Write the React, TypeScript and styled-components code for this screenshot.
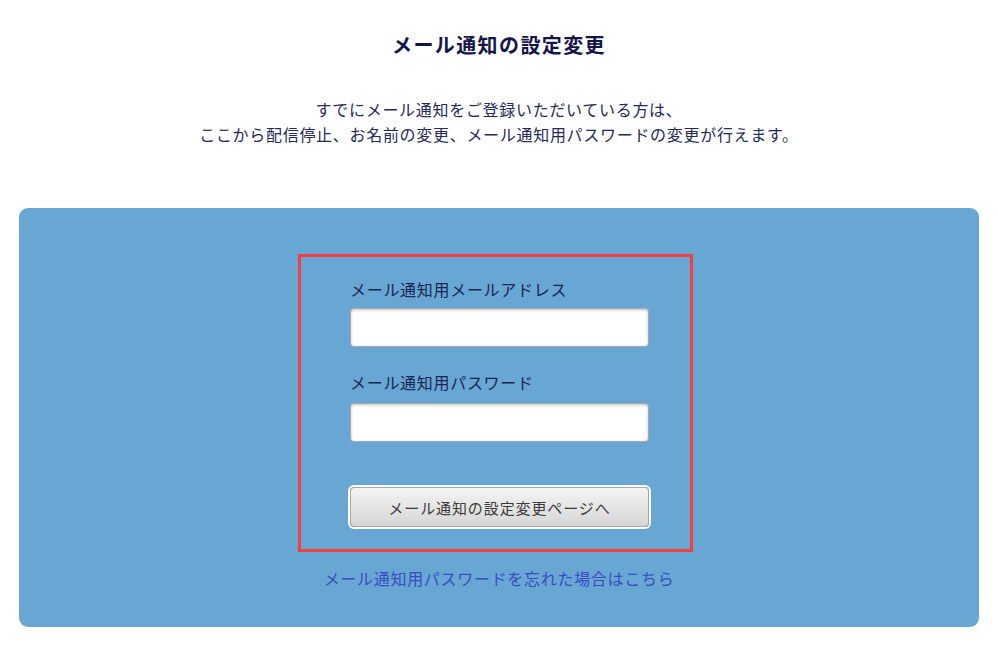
import React from "react";
import styled, { createGlobalStyle } from "styled-components";

const Global = createGlobalStyle`
  html, body { margin: 0; padding: 0; background: #ffffff; }
  body { font-family: "Noto Sans CJK JP", "Noto Sans", sans-serif; }
  * { box-sizing: border-box; }
`;

const Page = styled.div`
  width: 998px;
  display: flex;
  flex-direction: column;
  align-items: center;
  padding: 30px 19px 0;
`;

const Title = styled.h1`
  margin: 0;
  font-size: 20px;
  line-height: 30px;
  font-weight: 700;
  letter-spacing: 1.4px;
  color: #14164a;
  text-align: center;
`;

const Lead = styled.p`
  margin: 37px 0 0;
  font-size: 16px;
  line-height: 25px;
  letter-spacing: 0.7px;
  color: #262a58;
  text-align: center;
`;

const Panel = styled.section`
  margin-top: 61px;
  width: 100%;
  background: #68a6d3;
  border-radius: 9px;
  display: flex;
  flex-direction: column;
  align-items: center;
  padding: 46px 0 37px;
`;

const Form = styled.form`
  width: 395px;
  margin-right: 7px;
  border: 3px solid #f23f3f;
  padding: 20px 41px 22px 49px;
  display: flex;
  flex-direction: column;
`;

const Label = styled.label<{ $gap?: number }>`
  display: block;
  margin-top: ${(p) => p.$gap ?? 0}px;
  font-size: 16px;
  line-height: 24px;
  letter-spacing: 0.7px;
  color: #1c2552;
`;

const Input = styled.input<{ $gap?: number }>`
  display: block;
  width: 299px;
  height: 39px;
  margin-top: ${(p) => p.$gap ?? 7}px;
  border: 1px solid #a9a9a9;
  border-radius: 4px;
  background: #ffffff;
  box-shadow: inset 0 1px 3px rgba(0, 0, 0, 0.25);
  outline: none;
`;

const Button = styled.button`
  width: 299px;
  height: 40px;
  margin-top: 45px;
  border: 1px solid #a8a8a8;
  border-radius: 4px;
  box-shadow: 0 0 0 2px #ffffff;
  background: linear-gradient(#f4f4f4, #d6d6d6);
  font-family: "Noto Sans CJK JP", "Noto Sans", sans-serif;
  font-size: 15px;
  letter-spacing: 0.9px;
  color: #3c3c3c;
  cursor: pointer;
`;

const Link = styled.a`
  margin-top: 14px;
  font-size: 16px;
  line-height: 24px;
  letter-spacing: 0.7px;
  color: #3a4bc4;
  text-decoration: none;
`;

export default function App() {
  return (
    <>
      <Global />
      <Page>
        <Title>メール通知の設定変更</Title>
        <Lead>
          すでにメール通知をご登録いただいている方は、
          <br />
          ここから配信停止、お名前の変更、メール通知用パスワードの変更が行えます。
        </Lead>
        <Panel>
          <Form onSubmit={(e) => e.preventDefault()}>
            <Label htmlFor="mail">メール通知用メールアドレス</Label>
            <Input id="mail" type="text" />
            <Label htmlFor="pass" $gap={23}>
              メール通知用パスワード
            </Label>
            <Input id="pass" type="password" $gap={9} />
            <Button type="submit">メール通知の設定変更ページへ</Button>
          </Form>
          <Link href="#">メール通知用パスワードを忘れた場合はこちら</Link>
        </Panel>
      </Page>
    </>
  );
}
